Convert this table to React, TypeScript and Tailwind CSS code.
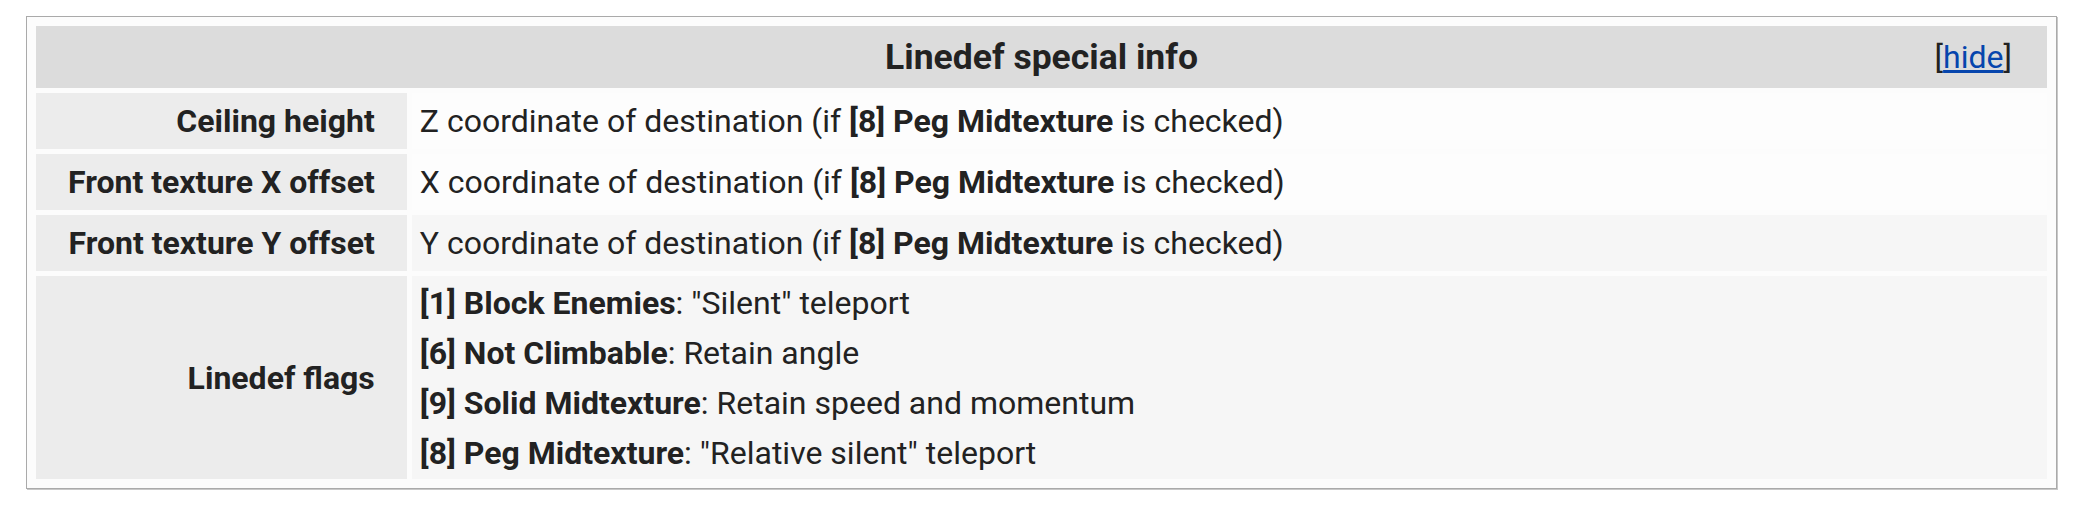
import React from "react";

const rows = [
  { label: "Ceiling height", axis: "Z", alt: false },
  { label: "Front texture X offset", axis: "X", alt: false },
  { label: "Front texture Y offset", axis: "Y", alt: true },
];

const flags = [
  { id: "[1]", name: "Block Enemies", text: '"Silent" teleport' },
  { id: "[6]", name: "Not Climbable", text: "Retain angle" },
  { id: "[9]", name: "Solid Midtexture", text: "Retain speed and momentum" },
  { id: "[8]", name: "Peg Midtexture", text: '"Relative silent" teleport' },
];

export default function App() {
  return (
    <div className="min-h-[512px] bg-white pl-[26px] pr-[18px] pt-[16px] font-['Roboto',sans-serif] text-[32px] text-[#222]">
      <table className="w-full border-separate border-spacing-[5px] border border-[#aaa] bg-[#fcfcfc] p-[4px] shadow-[1px_1px_0_#c8c8c8]">
        <tbody>
          <tr>
            <th colSpan={2} className="relative h-[62px] bg-[#dcdcdc] p-0 text-center text-[35.5px] font-bold leading-[62px]">
              Linedef special info
              <span className="absolute right-[35px] top-0 text-[32px] font-normal">
                [<a className="text-[#0645ad] underline">hide</a>]
              </span>
            </th>
          </tr>
          {rows.map((row) => (
            <tr key={row.label}>
              <th className="h-[56px] whitespace-nowrap bg-[#ececec] px-[32px] py-0 text-right font-bold leading-[46px]">
                {row.label}
              </th>
              <td
                className={`w-full px-[8px] py-0 text-left leading-[46px] ${
                  row.alt ? "bg-[#f6f6f6]" : "bg-[#fdfdfd]"
                }`}
              >
                {row.axis} coordinate of destination (if <b>[8] Peg Midtexture</b> is checked)
              </td>
            </tr>
          ))}
          <tr>
            <th className="whitespace-nowrap bg-[#ececec] px-[32px] py-0 text-right font-bold">
              Linedef flags
            </th>
            <td className="bg-[#f6f6f6] px-[8px] py-[1.5px] text-left">
              {flags.map((f) => (
                <div key={f.id} className="leading-[50px]">
                  <b>
                    {f.id} {f.name}
                  </b>
                  : {f.text}
                </div>
              ))}
            </td>
          </tr>
        </tbody>
      </table>
    </div>
  );
}
